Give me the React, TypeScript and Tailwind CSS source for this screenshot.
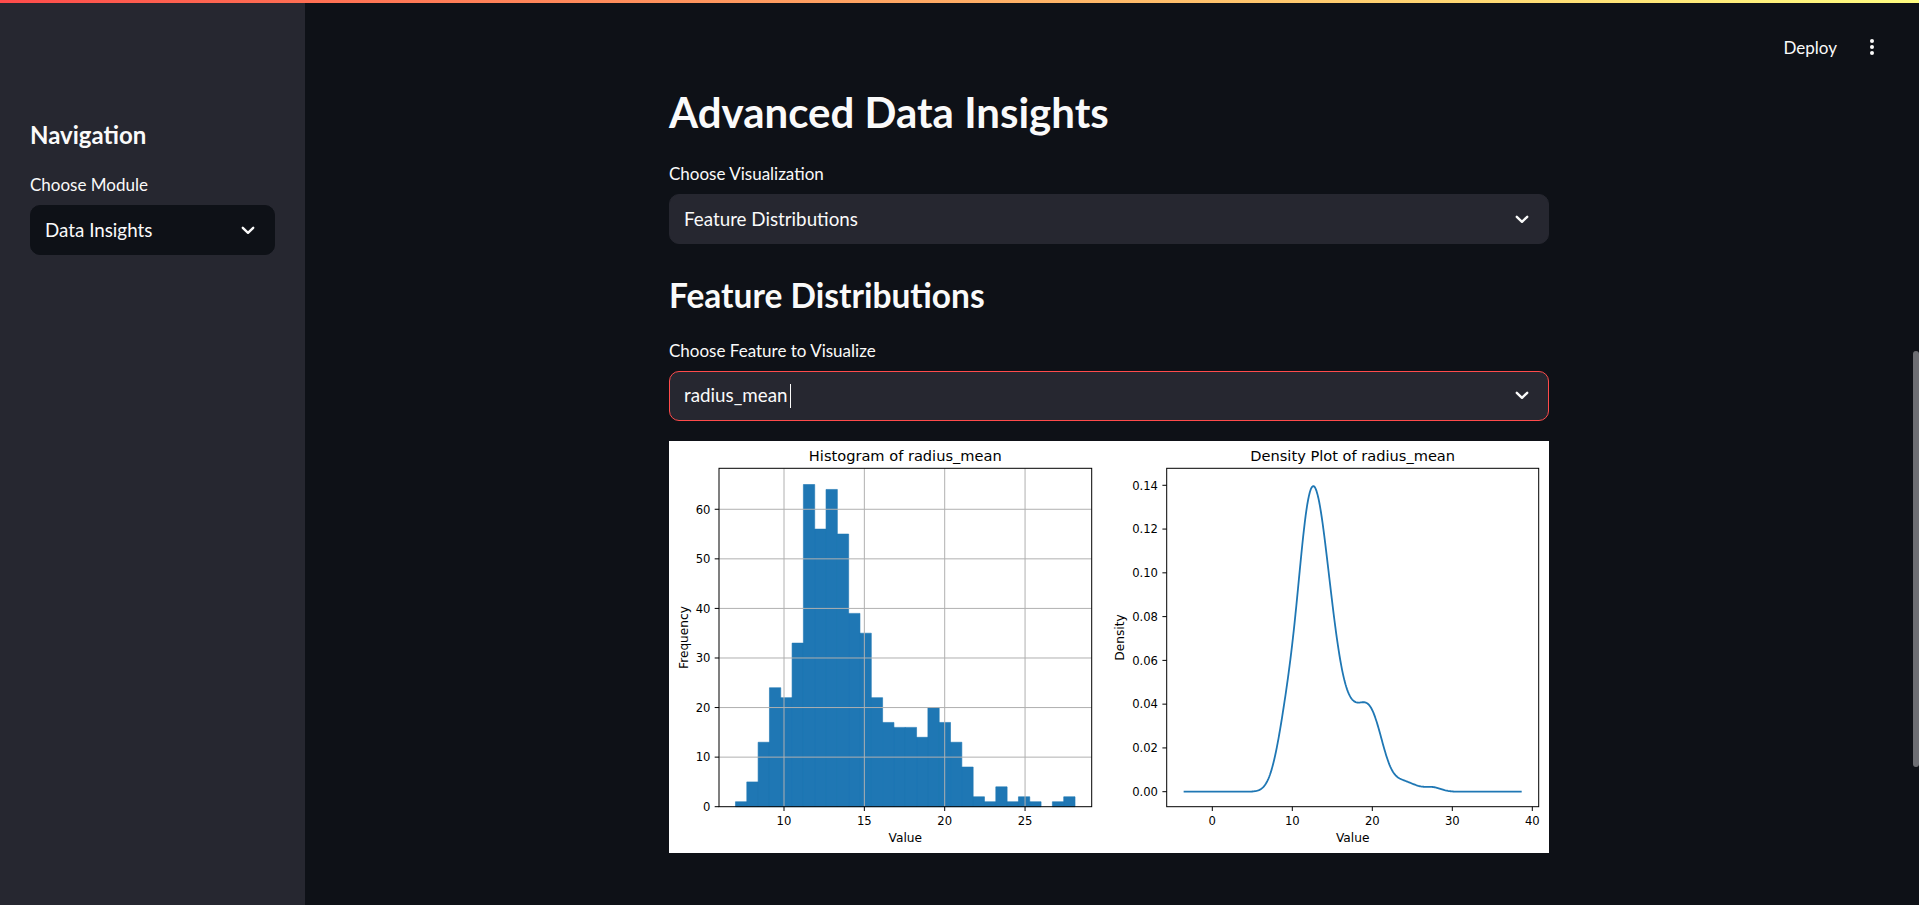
import React from 'react';

const FONT = { fontFamily: 'Lato, "Noto Sans", sans-serif' };

const counts = [1, 5, 13, 24, 22, 33, 65, 56, 64, 55, 39, 35, 22, 17, 16, 16, 14, 20, 17, 13, 8, 2, 1, 4, 1, 2, 1, 0, 1, 2];
const lo = 6.981;
const hi = 28.11;
const edges = Array.from({ length: 31 }, (_, i) => lo + (i * (hi - lo)) / 30);

// histogram axes
const hx = (v: number) => 115 + (v - 10) * 16.07;
const hy = (c: number) => 365.7 - c * 4.957;
// density axes
const dx = (v: number) => 543.3 + 8 * v;
const dy = (d: number) => 350.7 - 2188.6 * d;

function barsPath() {
  let d = '';
  counts.forEach((c, i) => {
    if (c === 0) return;
    const x0 = hx(edges[i]).toFixed(2);
    const x1 = hx(edges[i + 1]).toFixed(2);
    d += `M${x0},${hy(0)}V${hy(c).toFixed(2)}H${x1}V${hy(0)}Z`;
  });
  return d;
}

function kdePath() {
  const pts: number[] = [];
  counts.forEach((c, i) => {
    for (let k = 0; k < c; k++) pts.push(edges[i] + ((k + 0.5) / c) * (edges[i + 1] - edges[i]));
  });
  const n = pts.length;
  const mean = pts.reduce((a, b) => a + b, 0) / n;
  const sd = Math.sqrt(pts.reduce((a, b) => a + (b - mean) ** 2, 0) / (n - 1));
  const bw = sd * Math.pow(n, -0.2);
  const range = hi - lo;
  const start = lo - range / 2;
  const end = hi + range / 2;
  const norm = 1 / (n * bw * Math.sqrt(2 * Math.PI));
  let d = '';
  for (let i = 0; i < 400; i++) {
    const x = start + ((end - start) * i) / 399;
    let s = 0;
    for (const p of pts) {
      const z = (x - p) / bw;
      s += Math.exp(-0.5 * z * z);
    }
    d += `${i === 0 ? 'M' : 'L'}${dx(x).toFixed(2)},${dy(s * norm).toFixed(2)}`;
  }
  return d;
}

const Charts: React.FC = () => {
  const kde = React.useMemo(kdePath, []);
  const bars = React.useMemo(barsPath, []);
  const tick = { fontFamily: '"DejaVu Sans", sans-serif', fontSize: 11.6, fill: '#000' };
  const label = { fontFamily: '"DejaVu Sans", sans-serif', fontSize: 12.2, fill: '#000' };
  const title = { fontFamily: '"DejaVu Sans", sans-serif', fontSize: 14.6, fill: '#000' };

  return (
    <svg viewBox="0 0 880 412" className="block w-full h-[412px] bg-white">
      {/* histogram */}
      <path d={bars} fill="#1f77b4" stroke="#1f77b4" strokeWidth={0.6} />
      {[10, 15, 20, 25].map((v) => (
        <line key={v} x1={hx(v)} x2={hx(v)} y1={27.3} y2={365.7} stroke="#b0b0b0" strokeWidth={1} />
      ))}
      {[10, 20, 30, 40, 50, 60].map((v) => (
        <line key={v} x1={50} x2={422.7} y1={hy(v)} y2={hy(v)} stroke="#b0b0b0" strokeWidth={1} />
      ))}
      <rect x={50} y={27.3} width={372.7} height={338.4} fill="none" stroke="#000" strokeWidth={1} />
      {[0, 10, 20, 30, 40, 50, 60].map((v) => (
        <g key={v}>
          <line x1={45.7} x2={50} y1={hy(v)} y2={hy(v)} stroke="#000" />
          <text x={41.4} y={hy(v) + 4.3} textAnchor="end" style={tick}>
            {v}
          </text>
        </g>
      ))}
      {[10, 15, 20, 25].map((v) => (
        <g key={v}>
          <line x1={hx(v)} x2={hx(v)} y1={365.7} y2={370} stroke="#000" />
          <text x={hx(v)} y={383.6} textAnchor="middle" style={tick}>
            {v}
          </text>
        </g>
      ))}
      <text x={236.3} y={20} textAnchor="middle" style={title}>
        Histogram of radius_mean
      </text>
      <text x={236.3} y={400.5} textAnchor="middle" style={label}>
        Value
      </text>
      <text transform="translate(19,196.5) rotate(-90)" textAnchor="middle" style={label}>
        Frequency
      </text>

      {/* density */}
      <path d={kde} fill="none" stroke="#1f77b4" strokeWidth={1.8} strokeLinejoin="round" />
      <rect x={497.7} y={27.3} width={372} height={338.4} fill="none" stroke="#000" strokeWidth={1} />
      {[0, 0.02, 0.04, 0.06, 0.08, 0.1, 0.12, 0.14].map((v) => (
        <g key={v}>
          <line x1={493.4} x2={497.7} y1={dy(v)} y2={dy(v)} stroke="#000" />
          <text x={489} y={dy(v) + 4.3} textAnchor="end" style={tick}>
            {v.toFixed(2)}
          </text>
        </g>
      ))}
      {[0, 10, 20, 30, 40].map((v) => (
        <g key={v}>
          <line x1={dx(v)} x2={dx(v)} y1={365.7} y2={370} stroke="#000" />
          <text x={dx(v)} y={383.6} textAnchor="middle" style={tick}>
            {v}
          </text>
        </g>
      ))}
      <text x={683.7} y={20} textAnchor="middle" style={title}>
        Density Plot of radius_mean
      </text>
      <text x={683.7} y={400.5} textAnchor="middle" style={label}>
        Value
      </text>
      <text transform="translate(455,196.5) rotate(-90)" textAnchor="middle" style={label}>
        Density
      </text>
    </svg>
  );
};

const Chevron: React.FC = () => (
  <svg width="14" height="9" viewBox="0 0 14 9" fill="none">
    <path d="M1.8 1.8 L7 6.8 L12.2 1.8" stroke="#fafafa" strokeWidth="2.4" strokeLinecap="round" strokeLinejoin="round" />
  </svg>
);

const Select: React.FC<{ value: string; active?: boolean; dark?: boolean }> = ({ value, active, dark }) => (
  <div
    className={`flex h-[50px] items-center justify-between rounded-[10px] border pl-[14px] pr-[19px] ${
      active ? 'border-[#ff4b4b]' : dark ? 'border-[#0e1117]' : 'border-[#262730]'
    } ${dark ? 'bg-[#0e1117]' : 'bg-[#262730]'}`}
  >
    <div className="flex items-center">
      <span className="text-[18.8px] leading-none text-[#fafafa]">{value}</span>
      {active && <span className="ml-[3px] h-[24px] w-px bg-[#fafafa]" />}
    </div>
    <Chevron />
  </div>
);

const App: React.FC = () => {
  return (
    <div className="relative flex h-[905px] flex-col overflow-hidden bg-[#0e1117] text-[#fafafa]" style={FONT}>
      <div className="h-[3px] w-full bg-gradient-to-r from-[#ff4b4b] to-[#fffd80]" />

      <div className="flex flex-1">
        <aside className="w-[305px] shrink-0 bg-[#262730] px-[30px] pt-[120px]">
          <h2 className="text-[24px] font-bold leading-none">Navigation</h2>
          <p className="mt-[29px] text-[17px] leading-none">Choose Module</p>
          <div className="mt-[12px]">
            <Select value="Data Insights" dark />
          </div>
        </aside>

        <main className="flex flex-1 flex-col">
          <header className="flex h-[88px] items-center justify-end pr-[38px]">
            <span className="text-[17px] leading-none">Deploy</span>
            <button className="ml-[26px] flex w-[18px] flex-col items-center gap-[2.5px]">
              <span className="h-[3.8px] w-[3.8px] rounded-full bg-[#fafafa]" />
              <span className="h-[3.8px] w-[3.8px] rounded-full bg-[#fafafa]" />
              <span className="h-[3.8px] w-[3.8px] rounded-full bg-[#fafafa]" />
            </button>
          </header>

          <div className="pr-[6px]">
            <div className="mx-auto w-[880px]">
              <h1 className="text-[42px] font-bold leading-none">Advanced Data Insights</h1>
              <p className="mt-[32px] text-[17px] leading-none">Choose Visualization</p>
              <div className="mt-[12px]">
                <Select value="Feature Distributions" />
              </div>

              <h2 className="mt-[35px] text-[33.5px] font-bold leading-none">Feature Distributions</h2>
              <p className="mt-[29px] text-[17px] leading-none">Choose Feature to Visualize</p>
              <div className="mt-[12px]">
                <Select value="radius_mean" active />
              </div>

              <div className="mt-[20px]">
                <Charts />
              </div>
            </div>
          </div>
        </main>
      </div>

      <div className="absolute right-0 top-[351px] h-[416px] w-[6px] rounded-full bg-[#6d6e73]" />
    </div>
  );
};

export default App;
